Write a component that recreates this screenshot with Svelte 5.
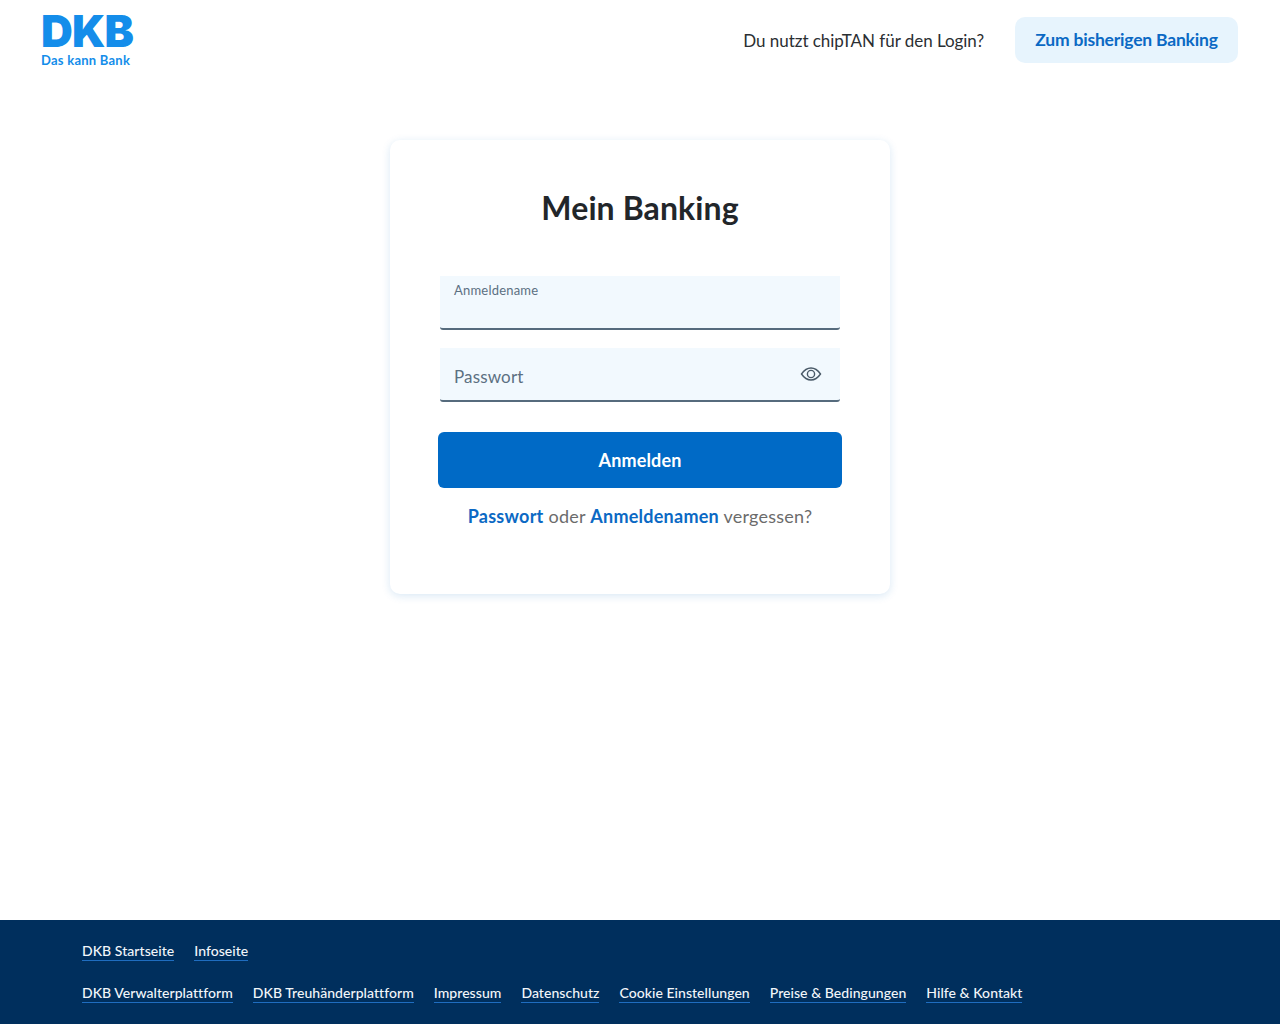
<script>
  let password = "";
  let username = "";

  const topLinks = ["DKB Startseite", "Infoseite"];
  const bottomLinks = [
    "DKB Verwalterplattform",
    "DKB Treuhänderplattform",
    "Impressum",
    "Datenschutz",
    "Cookie Einstellungen",
    "Preise & Bedingungen",
    "Hilfe & Kontakt"
  ];
</script>

<div class="page">
  <header class="header">
    <a class="logo" href="#top">
      <span class="logo-mark">DKB</span>
      <span class="logo-claim">Das kann Bank</span>
    </a>
    <div class="header-right">
      <span class="hint">Du nutzt chipTAN für den Login?</span>
      <button class="old-banking">Zum bisherigen Banking</button>
    </div>
  </header>

  <main class="main">
    <section class="card">
      <h1>Mein Banking</h1>

      <label class="field">
        <span class="label small">Anmeldename</span>
        <input bind:value={username} type="text" />
      </label>

      <label class="field second">
        <span class="label">Passwort</span>
        <input bind:value={password} type="password" />
        <svg class="eye" width="22" height="22" viewBox="0 0 22 22" fill="none" stroke="#4a5a68" stroke-width="1.4">
          <path d="M1.5 11 C4.5 6.6 7.6 5 11 5 C14.4 5 17.5 6.6 20.5 11 C17.5 15.4 14.4 17 11 17 C7.6 17 4.5 15.4 1.5 11 Z" />
          <circle cx="11" cy="11" r="3.6" />
        </svg>
      </label>

      <button class="submit">Anmelden</button>

      <p class="forgot">
        <a href="#top">Passwort</a> oder <a href="#top">Anmeldenamen</a> vergessen?
      </p>
    </section>
  </main>

  <footer class="footer">
    <nav class="row">
      {#each topLinks as link}
        <a href="#top">{link}</a>
      {/each}
    </nav>
    <nav class="row">
      {#each bottomLinks as link}
        <a href="#top">{link}</a>
      {/each}
    </nav>
  </footer>
</div>

<style>
  :global(body) {
    font-family: Lato, "Open Sans", sans-serif;
    background: #fff;
    color: #1f2328;
  }

  .page {
    height: 1024px;
    display: flex;
    flex-direction: column;
  }

  .header {
    height: 80px;
    padding: 0 42px 0 41px;
    display: flex;
    justify-content: space-between;
    align-items: flex-start;
  }

  .logo {
    display: flex;
    flex-direction: column;
    text-decoration: none;
    color: #148dea;
    padding-top: 9px;
  }

  .logo-mark {
    font-family: Inter, sans-serif;
    font-weight: 900;
    font-size: 44px;
    line-height: 44px;
    letter-spacing: -0.9px;
  }

  .logo-claim {
    font-size: 13px;
    font-weight: 700;
    line-height: 14px;
    letter-spacing: 0.25px;
  }

  .header-right {
    display: flex;
    align-items: center;
    gap: 31px;
    padding-top: 17px;
  }

  .hint {
    font-size: 17px;
    letter-spacing: -0.04px;
    color: #2b2f33;
  }

  .old-banking {
    width: 223px;
    height: 46px;
    padding-bottom: 3px;
    border: 0;
    border-radius: 10px;
    background: #e7f4fd;
    color: #0b69c4;
    font: 700 17.5px Lato, sans-serif;
    letter-spacing: -0.2px;
  }

  .main {
    flex: 1;
    padding-top: 60px;
    display: flex;
    justify-content: center;
    align-items: flex-start;
  }

  .card {
    box-sizing: border-box;
    width: 500px;
    height: 454px;
    padding: 48px 48px 0;
    border-radius: 10px;
    background: #fff;
    box-shadow: 0 2px 8px rgba(20, 110, 190, 0.16);
    display: flex;
    flex-direction: column;
    align-items: center;
  }

  h1 {
    margin: 0 0 48px;
    height: 40px;
    font-size: 32px;
    line-height: 40px;
    font-weight: 700;
    letter-spacing: 0.1px;
    color: #22262a;
  }

  .field {
    position: relative;
    box-sizing: border-box;
    display: block;
    width: 400px;
    height: 54px;
    background: #f2f9fe;
    border-bottom: 2px solid #566b7d;
    border-radius: 0 0 3px 3px;
    color: #5c7082;
  }

  .second {
    margin-top: 18px;
  }

  .label {
    position: absolute;
    left: 14px;
    top: 18px;
    font-size: 17px;
    line-height: 22px;
    letter-spacing: 0.15px;
  }

  .label.small {
    top: 6px;
    font-size: 13px;
    line-height: 17px;
    letter-spacing: 0.2px;
  }

  input {
    box-sizing: border-box;
    width: 100%;
    height: 100%;
    padding: 18px 14px 0;
    border: 0;
    outline: 0;
    background: transparent;
  }

  .eye {
    position: absolute;
    right: 18px;
    top: 15px;
  }

  .submit {
    flex: none;
    width: 404px;
    height: 56px;
    margin-top: 30px;
    border: 0;
    border-radius: 6px;
    background: #006ac6;
    color: #fff;
    font: 700 18px Lato, sans-serif;
    letter-spacing: 0.15px;
    padding-top: 1px;
  }

  .forgot {
    margin: 16px 0 0;
    font-size: 18px;
    line-height: 24px;
    color: #6b6b6b;
    letter-spacing: 0.25px;
  }

  .forgot a {
    color: #0b69c4;
    font-weight: 700;
    text-decoration: none;
  }

  .footer {
    box-sizing: border-box;
    height: 104px;
    padding: 21px 82px 0;
    background: #002f5d;
  }

  .row {
    display: flex;
    gap: 20px;
    margin-bottom: 22px;
  }

  .row a {
    color: #f2f6fa;
    font-size: 14px;
    line-height: 19px;
    font-weight: 500;
    letter-spacing: 0.05px;
    text-decoration: none;
    border-bottom: 1px solid #1f6dc0;
  }
</style>
